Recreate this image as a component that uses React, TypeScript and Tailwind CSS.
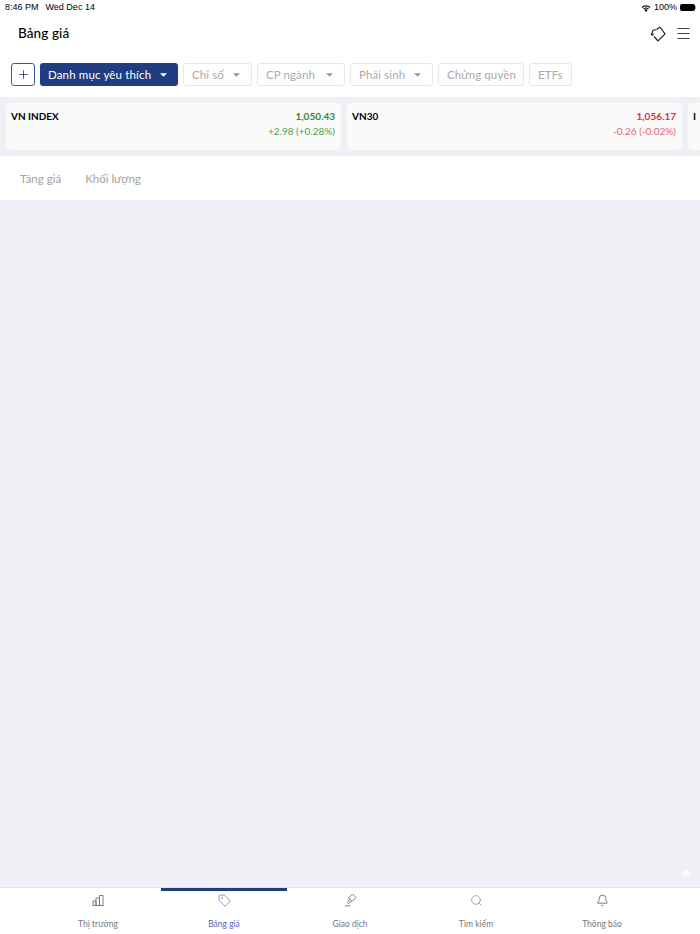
import { ArrowUp, Bell, Menu, Plus, Search, Tag } from "lucide-react"

const Caret = ({ className }: { className: string }) => (
    <svg width="7" height="4" viewBox="0 0 8 4" className={className}>
        <path d="M0 0h8L4 4z" fill="currentColor" />
    </svg>
)

const filters = [
    { label: "Chỉ số", width: "w-[69px]", caret: true },
    { label: "CP ngành", width: "w-[88px]", caret: true },
    { label: "Phái sinh", width: "w-[83px]", caret: true },
    { label: "Chứng quyền", width: "w-[86px]", caret: false },
    { label: "ETFs", width: "w-[43px]", caret: false },
]

const StatusBar = () => (
    <div className="flex h-[14px] items-center justify-between pl-[5px] pr-[4px] pt-[1px] text-[9px] text-black font-['Liberation_Sans',sans-serif]">
        <div className="flex gap-[7px]">
            <span>8:46 PM</span>
            <span>Wed Dec 14</span>
        </div>
        <div className="flex items-center gap-[3px]">
            <svg width="10" height="8" viewBox="0 0 10 8">
                <path d="M5 8 3.3 6.1a2.4 2.4 0 0 1 3.4 0z" fill="#000" />
                <path d="M2.5 5.2a3.6 3.6 0 0 1 5 0M1 3.5a5.7 5.7 0 0 1 8 0" stroke="#000" fill="none" strokeWidth="1.1" />
            </svg>
            <span>100%</span>
            <div className="flex items-center">
                <div className="h-[7px] w-[15px] rounded-[2px] bg-black" />
                <div className="h-[3px] w-px bg-gray-400" />
            </div>
        </div>
    </div>
)

const Header = () => (
    <div className="flex h-[39px] items-center justify-between pl-[18px] pr-[8px]">
        <h1 className="text-[13.5px] font-medium tracking-[0.1px] text-black">Bảng giá</h1>
        <div className="flex items-center gap-[9px] text-[#222]">
            <svg width="16" height="16" viewBox="0 0 16 16" fill="none" stroke="currentColor" strokeWidth="1.2">
                <path d="M10 1 15 8 8 15 4 10.5" />
                <path d="M10 1 6.5 3.6" />
                <path d="M2.2 9V6.5C2.2 4.5 4 3.4 6 3.9" />
                <path d="M1 7.6 2.2 9.2 3.6 8" />
            </svg>
            <Menu className="h-[17px] w-[17px] text-[#444]" strokeWidth={1.5} />
        </div>
    </div>
)

const FilterBar = () => (
    <div className="flex h-[44px] items-start gap-[5px] pl-[11px] pt-[10px]">
        <button className="flex h-[23px] w-[24px] items-center justify-center rounded-[3px] border border-[#3f57a0] text-[#1f3d80]">
            <Plus className="h-[13px] w-[13px]" strokeWidth={1.6} />
        </button>
        <button className="flex h-[23px] w-[138px] items-center justify-between whitespace-nowrap rounded-[3px] bg-[#1f3d80] pl-[8px] pr-[11px] text-[11.5px] tracking-[0.15px] text-white">
            <span>Danh mục yêu thích</span>
            <Caret className="text-white" />
        </button>
        {filters.map((filter) => (
            <button
                key={filter.label}
                className={`flex h-[23px] ${filter.width} items-center justify-between whitespace-nowrap rounded-[3px] border border-[#e8e8e8] px-[8px] text-[11.5px] tracking-[0.1px] text-[#a9a9a9]`}
            >
                <span>{filter.label}</span>
                {filter.caret && <Caret className="mr-[3px] text-[#999]" />}
            </button>
        ))}
    </div>
)

const IndexCard = ({ name, value, change, color, changeColor }: { name: string; value: string; change: string; color: string; changeColor: string }) => (
    <div className="flex h-[47px] w-[335px] shrink-0 justify-between rounded-[5px] bg-[#fafafa] pl-[5px] pr-[6px] pt-[6px] text-[10px]">
        <span className="font-bold leading-[14px] text-black">{name}</span>
        <div className="text-right leading-[14px]">
            <div className={`font-bold ${color}`}>{value}</div>
            <div className={`mt-[1px] ${changeColor}`}>{change}</div>
        </div>
    </div>
)

const Tab = ({ label, active, icon }: { label: string; active?: boolean; icon: React.ReactNode }) => (
    <div className="flex flex-col items-center">
        <div className={`h-[3px] w-full ${active ? "bg-[#1f3d80]" : ""}`} />
        <div className={`mt-[1px] flex h-[16px] items-center justify-center ${active ? "text-[#5067ad]" : "text-[#6f6f6f]"}`}>{icon}</div>
        <span className={`mt-[10px] text-[8.5px] leading-[12px] ${active ? "text-[#5067ad]" : "text-[#777]"}`}>{label}</span>
    </div>
)

const App = () => {
    return (
        <div className="flex h-[934px] w-[700px] flex-col overflow-hidden bg-[#eff0f5] font-['Lato',sans-serif]">
            <div className="bg-white">
                <StatusBar />
                <Header />
                <FilterBar />
            </div>

            <div className="flex gap-[6px] overflow-hidden pb-[6px] pl-[6px] pt-[6px]">
                <IndexCard name="VN INDEX" value="1,050.43" change="+2.98 (+0.28%)" color="text-[#2e8b2e]" changeColor="text-[#4b9e4b]" />
                <IndexCard name="VN30" value="1,056.17" change="-0.26 (-0.02%)" color="text-[#d8303c]" changeColor="text-[#e2646d]" />
                <IndexCard name="I" value="" change="" color="" changeColor="" />
            </div>

            <div className="flex h-[44px] items-center gap-[24px] bg-white pl-[20px] pt-[2px] text-[11.5px] text-[#a3a3a3]">
                <span>Tăng giá</span>
                <span>Khối lượng</span>
            </div>

            <div className="relative flex-1">
                <ArrowUp className="absolute bottom-[7px] right-[8px] h-[12px] w-[12px] text-white" strokeWidth={3} />
            </div>

            <div className="grid h-[47px] grid-cols-5 border-t border-[#e2e2e2] bg-white px-[35px]">
                <Tab
                    label="Thị trường"
                    icon={
                        <svg width="12" height="12" viewBox="0 0 12 12" fill="none" stroke="currentColor" strokeWidth="0.9">
                            <path d="M.5 11.5h11" />
                            <path d="M1 11.5V7h3v4.5M4 11.5V4h3.5v7.5M7.5 11.5V1.5H11v10" />
                        </svg>
                    }
                />
                <Tab label="Bảng giá" active icon={<Tag className="h-[13px] w-[13px]" strokeWidth={1.2} />} />
                <Tab
                    label="Giao dịch"
                    icon={
                        <svg width="13" height="14" viewBox="0 0 13 14" fill="none" stroke="currentColor" strokeWidth="0.9">
                            <path d="M8.5 1 12 4.5 8 8.5 4.5 5z" />
                            <path d="M5.5 6 3.5 9.5 4.5 10.5 8 8" />
                            <path d="M1 12.8h5" />
                        </svg>
                    }
                />
                <Tab label="Tìm kiếm" icon={<Search className="h-[13px] w-[13px]" strokeWidth={1.1} />} />
                <Tab label="Thông báo" icon={<Bell className="h-[13px] w-[13px] text-[#444]" strokeWidth={1.3} />} />
            </div>
        </div>
    )
}

export default App
